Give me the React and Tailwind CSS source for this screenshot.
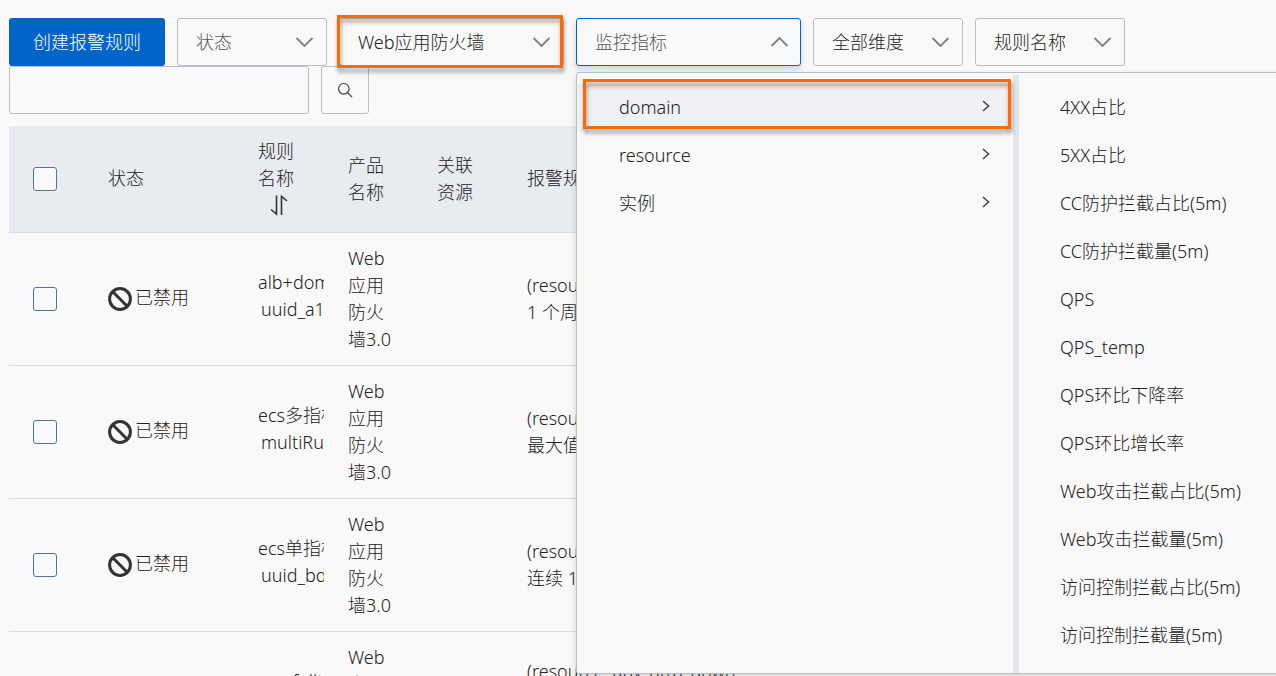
import React from "react";

const Chevron = ({ up }) => (
  <svg
    className={
      up
        ? "pointer-events-none absolute right-3 top-1/2 h-3 w-5 -translate-y-1/2 rotate-180"
        : "pointer-events-none absolute right-3 top-1/2 h-3 w-5 -translate-y-1/2"
    }
    viewBox="0 0 20 12"
    fill="none"
    stroke="#808080"
    strokeWidth="1.8"
    aria-hidden="true"
  >
    <path d="M1.500 2 L9.500 10 L17.500 2" />
  </svg>
);

const Highlight = ({ className }) => (
  <span
    aria-hidden="true"
    className={`pointer-events-none absolute border-3 border-[#ff6a00] [filter:drop-shadow(1px_4px_2px_rgba(0,0,0,0.4))] ${className}`}
  />
);

function Dropdown({ label, wide, muted, highlighted }) {
  return (
    <div className={wide ? "relative h-12 w-[225px]" : "relative h-12 w-[150px]"}>
      <select
        aria-label={label}
        className={`h-full w-full appearance-none rounded-[3px] border border-[#b8bfc9] bg-transparent pl-[18px] pr-10 outline-none ${
          muted ? "text-[#555]" : "text-[#222]"
        }`}
      >
        <option>{label}</option>
      </select>
      <Chevron />
      {highlighted && <Highlight className="-left-0.5 right-px -top-[3px] -bottom-0.5" />}
    </div>
  );
}

const dimensions = ["domain", "resource", "实例"];

const metrics = [
  "4XX占比",
  "5XX占比",
  "CC防护拦截占比(5m)",
  "CC防护拦截量(5m)",
  "QPS",
  "QPS_temp",
  "QPS环比下降率",
  "QPS环比增长率",
  "Web攻击拦截占比(5m)",
  "Web攻击拦截量(5m)",
  "访问控制拦截占比(5m)",
  "访问控制拦截量(5m)",
];

function MetricMenu() {
  return (
    <div className="absolute left-0 top-[54px] z-10 flex w-[760px] rounded-[3px] border border-[#b8bfc9] bg-[#f9f9f9] pt-0.5 shadow-[0_3px_6px_rgba(0,0,0,0.16)]">
      <ul className="w-[442px] border-r-6 border-[#e1e5e9] pt-2 pb-3.5">
        {dimensions.map((name, i) => (
          <li key={name} className="relative">
            <button
              type="button"
              className={`flex h-12 w-full items-center justify-between pl-[42px] pr-[23px] text-left ${
                i === 0 ? "bg-[#eff1f4]" : ""
              }`}
            >
              {name}
              <svg className="mb-0.5 h-3 w-2" viewBox="0 0 8 12" fill="none" stroke="#444" strokeWidth="1.5" aria-hidden="true">
                <path d="M1 1 L6.500 6 L1 11" />
              </svg>
            </button>
            {i === 0 && <Highlight className="left-1.5 right-0.5 -top-1 bottom-0.5" />}
          </li>
        ))}
      </ul>
      <ul className="flex-1 pt-2 pb-3.5">
        {metrics.map((name) => (
          <li key={name}>
            <button type="button" className="flex h-12 w-full items-center pl-[41px] text-left">
              {name}
            </button>
          </li>
        ))}
      </ul>
    </div>
  );
}

const rules = [
  { name: ["alb+domain", "uuid_a10b"], detail: ["(resource: QPS", "1 个周期"] },
  { name: ["ecs多指标", "multiRule"], detail: ["(resource: QPS", "最大值"] },
  { name: ["ecs单指标", "uuid_bd2"], detail: ["(resource: QPS", "连续 1 个周期"] },
  { name: ["ecs_fullth", "uuid_c3"], detail: ["(resource: any_http_down", "最大值", "连续 1 个周期"] },
];

const Box = ({ label }) => (
  <input
    type="checkbox"
    aria-label={label}
    className="block h-6 w-6 appearance-none rounded-[3px] border border-[#4f759f] bg-[#fafafa]"
  />
);

const SortIcon = () => (
  <svg className="mx-auto block h-[27px] w-5" viewBox="0 0 20 27" fill="none" stroke="#333" strokeWidth="1.6" aria-hidden="true">
    <path d="M7.500 3.500 V22 L2 17.500 M12.500 23 V4.500 L18 9" />
  </svg>
);

export default function App() {
  return (
    <main className="h-screen overflow-hidden bg-[#f9f9f9] pl-[9px] pt-[18px] font-['Noto_Sans','Noto_Sans_CJK_SC',sans-serif] text-lg leading-[27px] font-light text-[#222]">
      <div className="flex flex-wrap gap-x-3">
        <button type="button" className="h-12 w-[156px] rounded-[3px] bg-[#0064c8] text-white">
          创建报警规则
        </button>
        <Dropdown label="状态" muted />
        <Dropdown label="Web应用防火墙" wide highlighted />
        <div className="relative h-12 w-[225px]">
          <button
            type="button"
            aria-expanded="true"
            className="h-full w-full rounded-[3px] border border-[#0064c8] pl-[18px] text-left text-[#555] shadow-[0_3px_6px_rgba(0,0,0,0.16)]"
          >
            监控指标
          </button>
          <Chevron up />
          <MetricMenu />
        </div>
        <Dropdown label="全部维度" />
        <Dropdown label="规则名称" />
        <input
          type="text"
          aria-label="规则名称"
          className="h-12 w-[300px] rounded-[3px] border border-[#b8bfc9] px-4 outline-none"
        />
        <button
          type="button"
          aria-label="搜索"
          className="flex h-12 w-12 items-center justify-center rounded-[3px] border border-[#b8bfc9]"
        >
          <svg className="h-4 w-4" viewBox="0 0 16 16" fill="none" stroke="#444" strokeWidth="1.2" aria-hidden="true">
            <circle cx="6.800" cy="6.800" r="5.300" />
            <path d="M10.600 10.600 L15 15" />
          </svg>
        </button>
      </div>

      <table className="mt-3 w-full table-fixed border-separate border-spacing-0 text-left">
        <thead>
          <tr className="h-[107px] bg-[#e8ebf0] *:border-b *:border-[#dadcdf] *:pl-6 *:font-light">
            <th className="w-[75px]"><Box label="全选" /></th>
            <th className="w-[150px] pb-0.5">状态</th>
            <th className="w-[90px] pr-6 pb-0.5">规则名称<SortIcon /></th>
            <th className="w-[89px] pr-6">产品名称</th>
            <th className="w-[90px] pr-6">关联资源</th>
            <th className="pb-0.5">报警规则</th>
          </tr>
        </thead>
        <tbody>
          {rules.map((rule) => (
            <tr key={rule.name[0]} className="h-[133px] *:border-b *:border-[#dadcdf] *:pl-6">
              <td><Box label={rule.name[0]} /></td>
              <td>
                <span className="flex items-center gap-[3px]">
                  <svg className="h-6 w-6" viewBox="0 0 24 24" fill="none" stroke="#333" strokeWidth="3" aria-hidden="true">
                    <circle cx="12" cy="12" r="10.400" />
                    <path d="M4.800 4.800 L19.200 19.200" />
                  </svg>
                  <span className="pb-1">已禁用</span>
                </span>
              </td>
              <td className="overflow-hidden whitespace-nowrap pb-1.5">
                {rule.name[0]}
                <span className="block pl-[3px]">{rule.name[1]}</span>
              </td>
              <td className="pr-5">Web 应用防火墙3.0</td>
              <td />
              <td className="whitespace-nowrap">
                {rule.detail.map((line) => (
                  <div key={line}>{line}</div>
                ))}
              </td>
            </tr>
          ))}
        </tbody>
      </table>
    </main>
  );
}
